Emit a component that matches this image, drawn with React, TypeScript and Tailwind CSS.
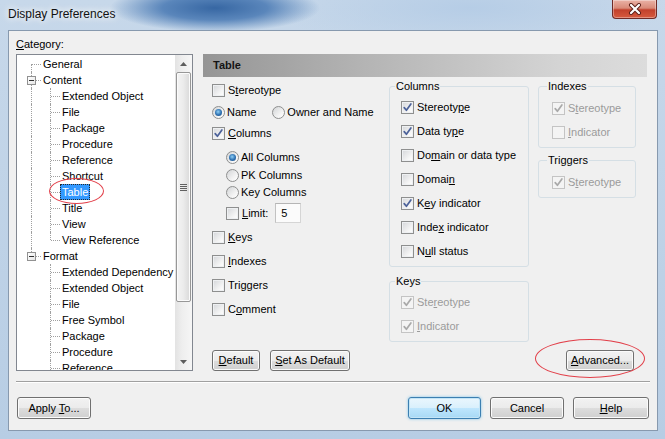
import React from 'react';

// underline one character (the access key) of a label
function U({ t, at }: { t: string; at?: number }) {
  if (at === undefined || at < 0) return <span>{t}</span>;
  return (
    <span className="whitespace-pre">
      {t.slice(0, at)}
      <span className="underline underline-offset-[1px]">{t[at]}</span>
      {t.slice(at + 1)}
    </span>
  );
}

function Check({ checked, disabled }: { checked?: boolean; disabled?: boolean }) {
  return (
    <span
      className={
        'flex h-[13px] w-[13px] shrink-0 items-center justify-center border ' +
        (disabled
          ? 'border-[#c4c4c4] bg-[#f4f4f4]'
          : 'border-[#8e8f8f] bg-[linear-gradient(135deg,#d4d6d9,#f6f6f6_70%,#ffffff)] shadow-[inset_0_0_0_1px_#eef0f2]')
      }
    >
      {checked && (
        <svg width="11" height="11" viewBox="0 0 11 11">
          <path
            d="M2.2 5.6 L4.4 8.3 L8.9 1.9"
            fill="none"
            stroke={disabled ? '#a9a9a9' : '#4c629a'}
            strokeWidth="1.7"
            strokeLinecap="round"
            strokeLinejoin="round"
          />
        </svg>
      )}
    </span>
  );
}

function Radio({ on }: { on?: boolean }) {
  return (
    <span className="flex h-[13px] w-[13px] shrink-0 items-center justify-center rounded-full border border-[#8e8f8f] bg-[linear-gradient(135deg,#d2d4d6,#f4f4f4_65%,#ffffff)]">
      {on && (
        <span className="h-[7px] w-[7px] rounded-full bg-[radial-gradient(circle_at_45%_40%,#8fd0f6_0%,#2d6fb0_55%,#1a4a80_100%)]" />
      )}
    </span>
  );
}

function CheckItem({
  label,
  at,
  checked,
  disabled,
}: {
  label: string;
  at?: number;
  checked?: boolean;
  disabled?: boolean;
}) {
  return (
    <div className="flex h-[16px] items-center gap-[3px]">
      <Check checked={checked} disabled={disabled} />
      <span className={disabled ? 'text-[#9b9b9b]' : 'text-black'}>
        <U t={label} at={at} />
      </span>
    </div>
  );
}

function RadioItem({ label, on }: { label: string; on?: boolean }) {
  return (
    <div className="flex h-[16px] items-center gap-[2px]">
      <Radio on={on} />
      <span>{label}</span>
    </div>
  );
}

function Btn({
  children,
  w,
  def,
  h = 'h-[21px]',
}: {
  children: React.ReactNode;
  w: string;
  def?: boolean;
  h?: string;
}) {
  return (
    <button
      className={
        w +
        ' ' +
        h +
        ' flex items-center justify-center rounded-[3px] border text-black ' +
        (def
          ? 'border-[#3c7fb1] bg-[linear-gradient(#eaf6fd_0%,#d9f0fc_50%,#bee6fd_51%,#a7d9f5_100%)] shadow-[inset_0_0_0_1px_#c4e5f6,0_0_3px_#7ec4ea]'
          : 'border-[#707070] bg-[linear-gradient(#f2f2f2_0%,#ebebeb_50%,#dddddd_51%,#cfcfcf_100%)] shadow-[inset_0_0_0_1px_#fbfbfb]')
      }
    >
      {children}
    </button>
  );
}

type Row = {
  label: string;
  root?: boolean;
  expander?: boolean;
  rootLine: 'down' | 'full' | 'up' | 'none';
  childLine?: 'full' | 'up';
  selected?: boolean;
};

const contentItems = [
  'Extended Object',
  'File',
  'Package',
  'Procedure',
  'Reference',
  'Shortcut',
  'Table',
  'Title',
  'View',
  'View Reference',
];
const formatItems = [
  'Extended Dependency',
  'Extended Object',
  'File',
  'Free Symbol',
  'Package',
  'Procedure',
  'Reference',
];

const rows: Row[] = [
  { label: 'General', root: true, rootLine: 'down' },
  { label: 'Content', root: true, expander: true, rootLine: 'full' },
  ...contentItems.map((label, i) => ({
    label,
    rootLine: 'full' as const,
    childLine: i === contentItems.length - 1 ? ('up' as const) : ('full' as const),
    selected: label === 'Table',
  })),
  { label: 'Format', root: true, expander: true, rootLine: 'up' },
  ...formatItems.map((label) => ({ label, rootLine: 'none' as const, childLine: 'full' as const })),
];

const dotV = 'absolute w-0 border-l border-dotted border-[#a0a0a0]';
const dotH = 'absolute top-[8px] h-0 border-t border-dotted border-[#a0a0a0]';

function TreeRow({ row }: { row: Row }) {
  return (
    <div className="flex h-[16px] shrink-0 items-center whitespace-nowrap">
      <div className="relative h-[16px] w-[26px] shrink-0">
        {row.rootLine === 'down' && <span className={dotV + ' top-[8px] bottom-0 left-[14px]'} />}
        {row.rootLine === 'full' && <span className={dotV + ' top-0 bottom-0 left-[14px]'} />}
        {row.rootLine === 'up' && <span className={dotV + ' top-0 h-[8px] left-[14px]'} />}
        {row.root && <span className={dotH + ' left-[15px] w-[9px]'} />}
        {row.expander && (
          <span className="absolute top-[4px] left-[10px] flex h-[9px] w-[9px] items-center justify-center border border-[#919191] bg-[linear-gradient(135deg,#ffffff,#e6e6e6)]">
            <span className="h-px w-[5px] bg-[#303030]" />
          </span>
        )}
      </div>
      {!row.root && (
        <div className="relative h-[16px] w-[17px] shrink-0">
          {row.childLine === 'full' && <span className={dotV + ' top-0 bottom-0 left-[7px]'} />}
          {row.childLine === 'up' && <span className={dotV + ' top-0 h-[8px] left-[7px]'} />}
          <span className={dotH + ' left-[8px] w-[9px]'} />
        </div>
      )}
      {row.selected ? (
        <span className="relative flex h-[16px] items-center border border-dotted border-[#2a2a2a] bg-[#3399ff] px-[1px] text-white">
          {row.label}
          <span className="pointer-events-none absolute top-[-7px] left-[-12px] h-[26px] w-[55px] rounded-[50%] border border-[#e2404a]" />
        </span>
      ) : row.root ? (
        <span>{row.label}</span>
      ) : (
        <span className="px-[2px]">{row.label}</span>
      )}
    </div>
  );
}

function Scrollbar() {
  return (
    <div className="flex h-full w-[17px] shrink-0 flex-col bg-[linear-gradient(90deg,#e3e3e3,#eeeeee_40%,#f6f6f6)]">
      <div className="flex h-[17px] shrink-0 items-center justify-center">
        <svg width="7" height="4" viewBox="0 0 7 4">
          <path d="M0 4 L3.5 0 L7 4 Z" fill="#5d5d5d" />
        </svg>
      </div>
      <div className="mx-[1px] flex h-[230px] shrink-0 items-center justify-center rounded-[2px] border border-[#979797] bg-[linear-gradient(90deg,#f4f4f4,#ebebeb_50%,#d9d9d9)] shadow-[inset_0_0_0_1px_#fbfbfb]">
        <div className="flex flex-col gap-[1px]">
          <span className="h-px w-[7px] bg-[#606060]" />
          <span className="h-px w-[7px] bg-[#606060]" />
          <span className="h-px w-[7px] bg-[#606060]" />
          <span className="h-px w-[7px] bg-[#606060]" />
        </div>
      </div>
      <div className="flex-1" />
      <div className="flex h-[17px] shrink-0 items-center justify-center">
        <svg width="7" height="4" viewBox="0 0 7 4">
          <path d="M0 0 L3.5 4 L7 0 Z" fill="#5d5d5d" />
        </svg>
      </div>
    </div>
  );
}

export default function App() {
  return (
    <div className="relative h-[439px] w-[665px] overflow-hidden bg-[radial-gradient(ellipse_105px_24px_at_215px_8px,#3767a3_0%,#5a86bb_50%,rgba(180,205,232,0)_100%),radial-gradient(ellipse_200px_40px_at_470px_8px,#b6cde6_0%,rgba(200,216,234,0)_100%),linear-gradient(180deg,#c7d8ea_0%,#b7cde4_100%)] font-['Liberation_Sans',Arial,sans-serif] text-[11px] leading-[13px] text-black">
      {/* title bar */}
      <div className="flex h-[30px] items-start">
        <span className="mt-[7px] ml-[8px] text-[12px] leading-[15px] text-[#111] [text-shadow:0_0_6px_#ffffff,0_0_10px_#ffffff]">
          Display Preferences
        </span>
        <div className="ml-auto mr-[8px] flex h-[19px] w-[45px] items-center justify-center rounded-b-[4px] border border-t-0 border-[#6f2b27] bg-[linear-gradient(#eab2a6_0%,#d98a78_45%,#c2412c_55%,#d65a3f_100%)] shadow-[inset_0_0_0_1px_rgba(255,255,255,0.35)]">
          <svg width="14" height="12" viewBox="0 0 14 12">
            <path d="M3 2 L11 10 M11 2 L3 10" stroke="#5a1e18" strokeWidth="4" strokeLinecap="round" />
            <path d="M3 2 L11 10 M11 2 L3 10" stroke="#ffffff" strokeWidth="2.2" strokeLinecap="round" />
          </svg>
        </div>
      </div>

      {/* client area */}
      <div className="ml-[8px] flex h-[401px] w-[650px] flex-col border border-[#8799ae] bg-[#f0f0f0]">
        <div className="flex">
          {/* category */}
          <div className="ml-[7px] flex w-[177px] flex-col">
            <div className="mt-[7px] h-[13px]">
              <U t="Category:" at={0} />
            </div>
            <div className="mt-[3px] flex h-[317px] border border-[#828790] bg-white">
              <div className="flex min-w-0 flex-1 flex-col overflow-hidden pt-px">
                {rows.map((r, i) => (
                  <TreeRow key={i} row={r} />
                ))}
              </div>
              <Scrollbar />
            </div>
          </div>

          {/* right panel */}
          <div className="mt-[23px] ml-[10px] flex h-[317px] w-[444px] flex-col">
            <div className="flex h-[23px] items-center bg-[linear-gradient(90deg,#959595_0%,#b3b3b3_35%,#d4d4d4_80%,#dcdcdc_100%)] pl-[10px] font-bold text-[#141414]">
              Table
            </div>
            <div className="flex h-[294px]">
              {/* left options */}
              <div className="flex w-[186px] flex-col pl-[9px]">
                <div className="mt-[5px]">
                  <CheckItem label="Stereotype" at={1} />
                </div>
                <div className="mt-[6px] flex">
                  <RadioItem label="Name" on />
                  <div className="ml-[16px]">
                    <RadioItem label="Owner and Name" />
                  </div>
                </div>
                <div className="mt-[5px]">
                  <CheckItem label="Columns" at={0} checked />
                </div>
                <div className="mt-[8px] pl-[14px]">
                  <RadioItem label="All Columns" on />
                </div>
                <div className="mt-[2px] pl-[14px]">
                  <RadioItem label="PK Columns" />
                </div>
                <div className="mt-px pl-[14px]">
                  <RadioItem label="Key Columns" />
                </div>
                <div className="mt-[3px] flex h-[20px] items-center pl-[14px]">
                  <CheckItem label="Limit:" at={0} />
                  <div className="ml-[7px] flex h-[20px] w-[26px] items-center border border-[#d5d5d5] border-t-[#b5b5b5] border-l-[#c2c2c2] bg-[#fbfbfb] pl-[5px]">
                    5
                  </div>
                </div>
                <div className="mt-[6px]">
                  <CheckItem label="Keys" at={0} />
                </div>
                <div className="mt-[8px]">
                  <CheckItem label="Indexes" at={0} />
                </div>
                <div className="mt-[8px]">
                  <CheckItem label="Triggers" at={3} />
                </div>
                <div className="mt-[8px]">
                  <CheckItem label="Comment" at={1} />
                </div>
                <div className="mt-auto flex gap-[10px]">
                  <Btn w="w-[48px]">
                    <U t="Default" at={0} />
                  </Btn>
                  <Btn w="w-[80px]">
                    <U t="Set As Default" at={0} />
                  </Btn>
                </div>
              </div>

              {/* columns + keys */}
              <div className="flex w-[140px] flex-col">
                <fieldset className="mt-[3px] rounded-[3px] border border-[#d5dfe5]">
                  <legend className="ml-[5px] px-px leading-[13px]">Columns</legend>
                  <div className="flex flex-col gap-[8px] pt-[6px] pb-[7px] pl-[11px]">
                    <CheckItem label="Stereotype" at={8} checked />
                    <CheckItem label="Data type" at={7} checked />
                    <CheckItem label="Domain or data type" at={2} />
                    <CheckItem label="Domain" at={5} />
                    <CheckItem label="Key indicator" at={1} checked />
                    <CheckItem label="Index indicator" at={4} />
                    <CheckItem label="Null status" at={1} />
                  </div>
                </fieldset>
                <fieldset className="mt-[8px] rounded-[3px] border border-[#d5dfe5]">
                  <legend className="ml-[5px] px-px leading-[13px]">Keys</legend>
                  <div className="flex flex-col gap-[8px] pt-[6px] pb-[7px] pl-[11px]">
                    <CheckItem label="Stereotype" at={3} checked disabled />
                    <CheckItem label="Indicator" at={0} checked disabled />
                  </div>
                </fieldset>
              </div>

              {/* indexes + triggers */}
              <div className="ml-[9px] flex w-[98px] flex-col">
                <fieldset className="mt-[3px] rounded-[3px] border border-[#d5dfe5]">
                  <legend className="ml-[8px] px-px leading-[13px]">Indexes</legend>
                  <div className="flex flex-col gap-[8px] pt-[7px] pb-[7px] pl-[13px]">
                    <CheckItem label="Stereotype" at={1} checked disabled />
                    <CheckItem label="Indicator" at={0} disabled />
                  </div>
                </fieldset>
                <fieldset className="mt-[6px] rounded-[3px] border border-[#d5dfe5]">
                  <legend className="ml-[8px] px-px leading-[13px]">Triggers</legend>
                  <div className="flex flex-col pt-[7px] pb-[7px] pl-[13px]">
                    <CheckItem label="Stereotype" at={1} checked disabled />
                  </div>
                </fieldset>
                <div className="relative mt-auto mr-[2px] self-end">
                  <Btn w="w-[68px]">
                    <U t="Advanced..." at={0} />
                  </Btn>
                  <span className="pointer-events-none absolute top-[-11px] left-[-31px] h-[39px] w-[110px] rounded-[50%] border border-[#e2404a]" />
                </div>
              </div>
            </div>
          </div>
        </div>

        {/* separator */}
        <div className="mx-[7px] mt-[10px] h-[2px] border-t border-b border-t-[#a0a0a0] border-b-white" />

        {/* bottom buttons */}
        <div className="mt-[14px] flex px-[8px]">
          <Btn w="w-[74px]" h="h-[22px]">
            <U t="Apply To..." at={6} />
          </Btn>
          <div className="ml-auto flex gap-[9px]">
            <Btn w="w-[73px]" h="h-[22px]" def>
              OK
            </Btn>
            <Btn w="w-[74px]" h="h-[22px]">
              Cancel
            </Btn>
            <Btn w="w-[76px]" h="h-[22px]">
              <U t="Help" at={0} />
            </Btn>
          </div>
        </div>
      </div>
    </div>
  );
}
